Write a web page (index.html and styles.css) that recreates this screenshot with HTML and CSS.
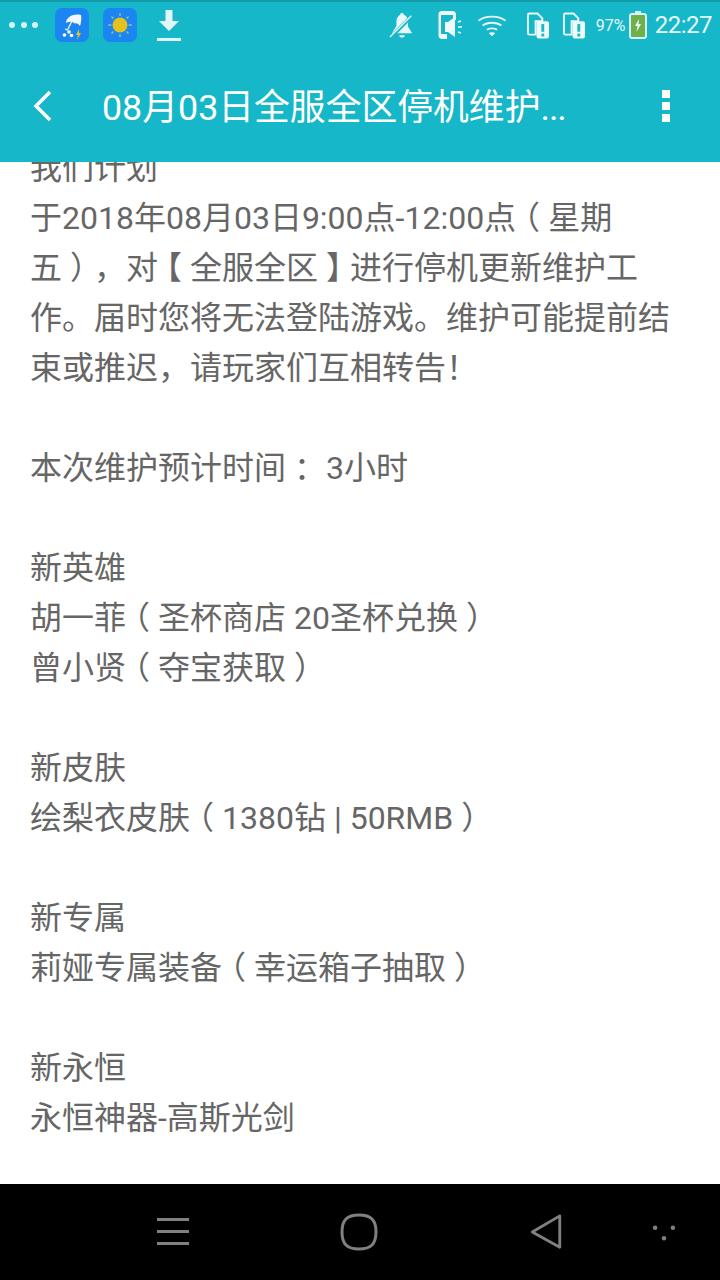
FILE: index.html
```html
<!DOCTYPE html>
<html lang="zh-CN">
<head>
  <meta charset="UTF-8">
  <meta name="viewport" content="width=device-width, initial-scale=1.0">
  <title>08月03日全服全区停机维护</title>
  <link rel="stylesheet" href="styles.css">
</head>
<body>
  <div class="screen">
    <header class="header">
      <div class="status-bar">
        <div class="status-left">
          <div class="dots"><span></span><span></span><span></span></div>
          <svg class="app-icon" width="34" height="34" viewBox="0 0 34 34">
            <rect width="34" height="34" rx="7" fill="#1b86f2"/>
            <path d="M11 15C11 10 17 5 26 7C26.500 9 26.500 14 25 18C23 15 21 15 19.500 15.500C18 13.500 14 13 11 15Z" fill="#f2f8fe"/>
            <path d="M18 11L13 21C12.500 22.500 10.500 22 10.500 20.500" fill="none" stroke="#f2f8fe" stroke-width="1.2"/>
            <circle cx="14" cy="24" r="1.800" fill="#fff"/>
            <circle cx="9.500" cy="27" r="1.800" fill="#fff"/>
            <circle cx="16.500" cy="27.500" r="1.800" fill="#fff"/>
            <path d="M24 21L21 27H23L22 32L26 25H24Z" fill="#e6c12c"/>
          </svg>
          <svg class="app-icon" width="34" height="34" viewBox="0 0 34 34">
            <rect width="34" height="34" rx="7" fill="#1b86f2"/>
            <circle cx="17" cy="17" r="7.500" fill="#e6c01f"/>
            <g stroke="#9bb9a0" stroke-width="1.500">
              <path d="M17 5V8M17 26V29M5 17H8.500M25.500 17H29M8.500 8.500L10.500 10.500M23.500 23.500L25.500 25.500M8.500 25.500L10.500 23.500M23.500 10.500L25.500 8.500"/>
            </g>
          </svg>
          <svg class="download-icon" width="24" height="32" viewBox="0 0 24 32">
            <path d="M8.500 1H15.500V12H22L12 22L2 12H8.500Z" fill="#e2f6f8"/>
            <rect y="29" width="24" height="3" fill="#e2f6f8"/>
          </svg>
        </div>
        <div class="status-right">
          <svg class="icon-bell" width="26" height="28" viewBox="0 0 28 30">
            <path d="M14 2C15.500 2 16 3 16 4C19 5 20.500 7.500 20.500 11V17L25 24H3L8 16V11C8 7.500 10 5 12 4C12 3 12.500 2 14 2Z" fill="#e8f8fa"/>
            <path d="M11 26H17C17 28 15.500 28.500 14 28.500C12.500 28.500 11 28 11 26Z" fill="#e8f8fa"/>
            <path d="M27 3L3 27" stroke="#16b7c8" stroke-width="4"/>
            <path d="M24 5L1 28" stroke="#e8f8fa" stroke-width="1.500"/>
          </svg>
          <svg class="icon-phone" width="25" height="28" viewBox="0 0 25 28">
            <path d="M4 0H14C16 0 18 1 18 3V9H15V4H3V23H9V28H4C2 28 0.500 26.500 0.500 24V3C0.500 1 2 0 4 0Z" fill="#eefafb"/>
            <path d="M7 11H10L17 6V26L10 21H7Z" fill="#eefafb"/>
            <path d="M20 11L23 10M20 16H24M20 21L23 22" stroke="#eefafb" stroke-width="1.600"/>
          </svg>
          <svg class="icon-wifi" width="30" height="23" viewBox="0 0 32 24">
            <g fill="none" stroke="#e8f8fa" stroke-width="2">
              <path d="M1.500 7C9 1 23 1 30.500 7"/>
              <path d="M6 12C11 8 21 8 26 12"/>
              <path d="M10.500 16.500C13 14.500 19 14.500 21.500 16.500"/>
            </g>
            <path d="M12.500 20C14.500 18.800 17.500 18.800 19.500 20L16 23.500Z" fill="#e8f8fa"/>
          </svg>
          <svg class="icon-sim" width="22" height="27" viewBox="0 0 23 27">
            <path d="M2.500 1H11L16 6V9H9V23H2.500C1.500 23 1 22.500 1 21.500V2.500C1 1.500 1.500 1 2.500 1Z" fill="none" stroke="#eefafb" stroke-width="2"/>
            <path d="M10 9H21C22 9 23 10 23 11V25C23 26 22 27 21 27H12C11 27 10 26 10 25Z" fill="#eefafb"/>
            <rect x="15" y="12" width="3" height="8" fill="#16b7c8"/>
            <rect x="15" y="22" width="3" height="3" fill="#16b7c8"/>
          </svg>
          <svg class="icon-sim last" width="22" height="27" viewBox="0 0 23 27">
            <path d="M2.500 1H11L16 6V9H9V23H2.500C1.500 23 1 22.500 1 21.500V2.500C1 1.500 1.500 1 2.500 1Z" fill="none" stroke="#eefafb" stroke-width="2"/>
            <path d="M10 9H21C22 9 23 10 23 11V25C23 26 22 27 21 27H12C11 27 10 26 10 25Z" fill="#eefafb"/>
            <rect x="15" y="12" width="3" height="8" fill="#16b7c8"/>
            <rect x="15" y="22" width="3" height="3" fill="#16b7c8"/>
          </svg>
          <span class="battery-text">97%</span>
          <svg class="icon-battery" width="18" height="28" viewBox="0 0 18 28">
            <rect x="6" y="0" width="6" height="3" fill="#d6f3f6"/>
            <rect x="1" y="3" width="16" height="24" rx="2" fill="#6fb04a" stroke="#d6f3f6" stroke-width="2"/>
            <path d="M10 8L6 15H8.500L7.500 21L12 13H9.500Z" fill="#eefafb"/>
          </svg>
          <span class="clock">22:27</span>
        </div>
      </div>
      <div class="toolbar">
        <svg class="back" width="24" height="34" viewBox="0 0 24 34">
          <path d="M19 3L5 17L19 31" fill="none" stroke="#fff" stroke-width="3.500"/>
        </svg>
        <h1 class="title">08月03日全服全区停机维护<span class="ellipsis">...</span></h1>
        <div class="more"><span></span><span></span><span></span></div>
      </div>
    </header>

    <main class="content">
      <div class="article">
        <p>我们计划</p>
        <p>于2018年08月03日9:00点-12:00点<span class="punct">（</span>星期<br>五<span class="punct">）</span>，对<span class="punct">【</span>全服全区<span class="punct">】</span>进行停机更新维护工<br>作。届时您将无法登陆游戏。维护可能提前结<br>束或推迟，请玩家们互相转告！</p>
        <p class="gap">本次维护预计时间<span class="punct colon">：</span>3小时</p>
        <p class="gap">新英雄</p>
        <p>胡一菲<span class="punct">（</span>圣杯商店 20圣杯兑换<span class="punct">）</span></p>
        <p>曾小贤<span class="punct">（</span>夺宝获取<span class="punct">）</span></p>
        <p class="gap">新皮肤</p>
        <p>绘梨衣皮肤<span class="punct">（</span>1380钻 | 50RMB<span class="punct">）</span></p>
        <p class="gap">新专属</p>
        <p>莉娅专属装备<span class="punct">（</span>幸运箱子抽取<span class="punct">）</span></p>
        <p class="gap">新永恒</p>
        <p>永恒神器-高斯光剑</p>
      </div>
    </main>

    <nav class="nav-bar">
      <div class="nav-menu"><span></span><span></span><span></span></div>
      <svg class="nav-home" width="38" height="38" viewBox="0 0 38 38">
        <path d="M19 2C31 2 36 7 36 19C36 31 31 36 19 36C7 36 2 31 2 19C2 7 7 2 19 2Z" fill="none" stroke="#808080" stroke-width="3"/>
      </svg>
      <svg class="nav-back" width="33" height="36" viewBox="0 0 34 38">
        <path d="M31 2L2 19L31 35Z" fill="none" stroke="#808080" stroke-width="3" stroke-linejoin="round"/>
      </svg>
      <svg class="nav-dots" width="26" height="16" viewBox="0 0 26 18">
        <circle cx="3" cy="3" r="2.500" fill="#808080"/>
        <circle cx="23" cy="3" r="2.500" fill="#808080"/>
        <circle cx="13" cy="15" r="2.500" fill="#808080"/>
      </svg>
    </nav>
  </div>
</body>
</html>
```

FILE: styles.css
```css
* {
  box-sizing: border-box;
}

body {
  margin: 0;
  font-family: Roboto, "Noto Sans CJK SC", sans-serif;
  background-color: #fff;
  text-spacing-trim: space-all;
}

.screen {
  width: 720px;
  height: 1280px;
  display: flex;
  flex-direction: column;
  overflow: hidden;
}

.header {
  height: 162px;
  flex-shrink: 0;
  background-color: #16b7c8;
  border-top: 2px solid #119aa9;
  position: relative;
  z-index: 1;
}

.status-bar {
  height: 48px;
  display: flex;
  justify-content: space-between;
  align-items: center;
  padding: 0 8px 2px 9px;
}

.status-left,
.status-right {
  display: flex;
  align-items: center;
}

.dots {
  display: flex;
  gap: 5.5px;
  width: 46px;
}

.dots span {
  width: 6px;
  height: 6px;
  border-radius: 50%;
  background-color: #d6f3f6;
}

.app-icon {
  margin-right: 14px;
}

.download-icon {
  margin-left: 6px;
}

.icon-bell {
  margin-right: 23px;
}

.icon-phone {
  margin-right: 14px;
}

.icon-wifi {
  margin-right: 20px;
}

.icon-sim {
  margin-right: 14px;
}

.icon-sim.last {
  margin-right: 11px;
}

.battery-text {
  width: 29px;
  font-size: 16px;
  color: #e8f8fa;
  white-space: nowrap;
  margin-right: 4px;
}

.clock {
  font-size: 24px;
  letter-spacing: -0.5px;
  color: #e8f8fa;
  margin-left: 8px;
}

.toolbar {
  height: 112px;
  display: flex;
  align-items: center;
  padding: 0 50px 0 31px;
}

.back {
  flex-shrink: 0;
}

.title {
  flex: 1;
  margin: 0 0 4px 47px;
  font-size: 35.8px;
  font-weight: 400;
  color: #fff;
  white-space: nowrap;
}

.ellipsis {
  letter-spacing: -1px;
}

.more {
  display: flex;
  flex-direction: column;
  gap: 4px;
}

.more span {
  width: 8px;
  height: 8px;
  background-color: #fff;
}

.content {
  flex: 1;
  overflow: hidden;
}

.article {
  margin-top: -19px;
  padding: 0 30px;
  font-size: 32px;
  line-height: 50px;
  color: #666;
}

.article p {
  margin: 0;
  white-space: nowrap;
}

.article .gap {
  margin-top: 50px;
}

/* full width marks sit centred in their cell on this device */
.punct {
  display: inline-block;
  width: 1em;
  text-align: center;
  font-feature-settings: "halt" 1;
}

.colon {
  margin-right: 8px;
}

.nav-bar {
  height: 96px;
  flex-shrink: 0;
  background-color: #000;
  display: flex;
  align-items: center;
  padding-left: 157px;
}

.nav-menu {
  display: flex;
  flex-direction: column;
  gap: 9px;
  width: 32px;
  margin-bottom: 2px;
}

.nav-menu span {
  height: 3px;
  background-color: #808080;
}

.nav-home {
  margin-left: 151px;
}

.nav-back {
  margin-left: 152px;
}

.nav-dots {
  margin-left: 88px;
  margin-top: 2px;
}
```
